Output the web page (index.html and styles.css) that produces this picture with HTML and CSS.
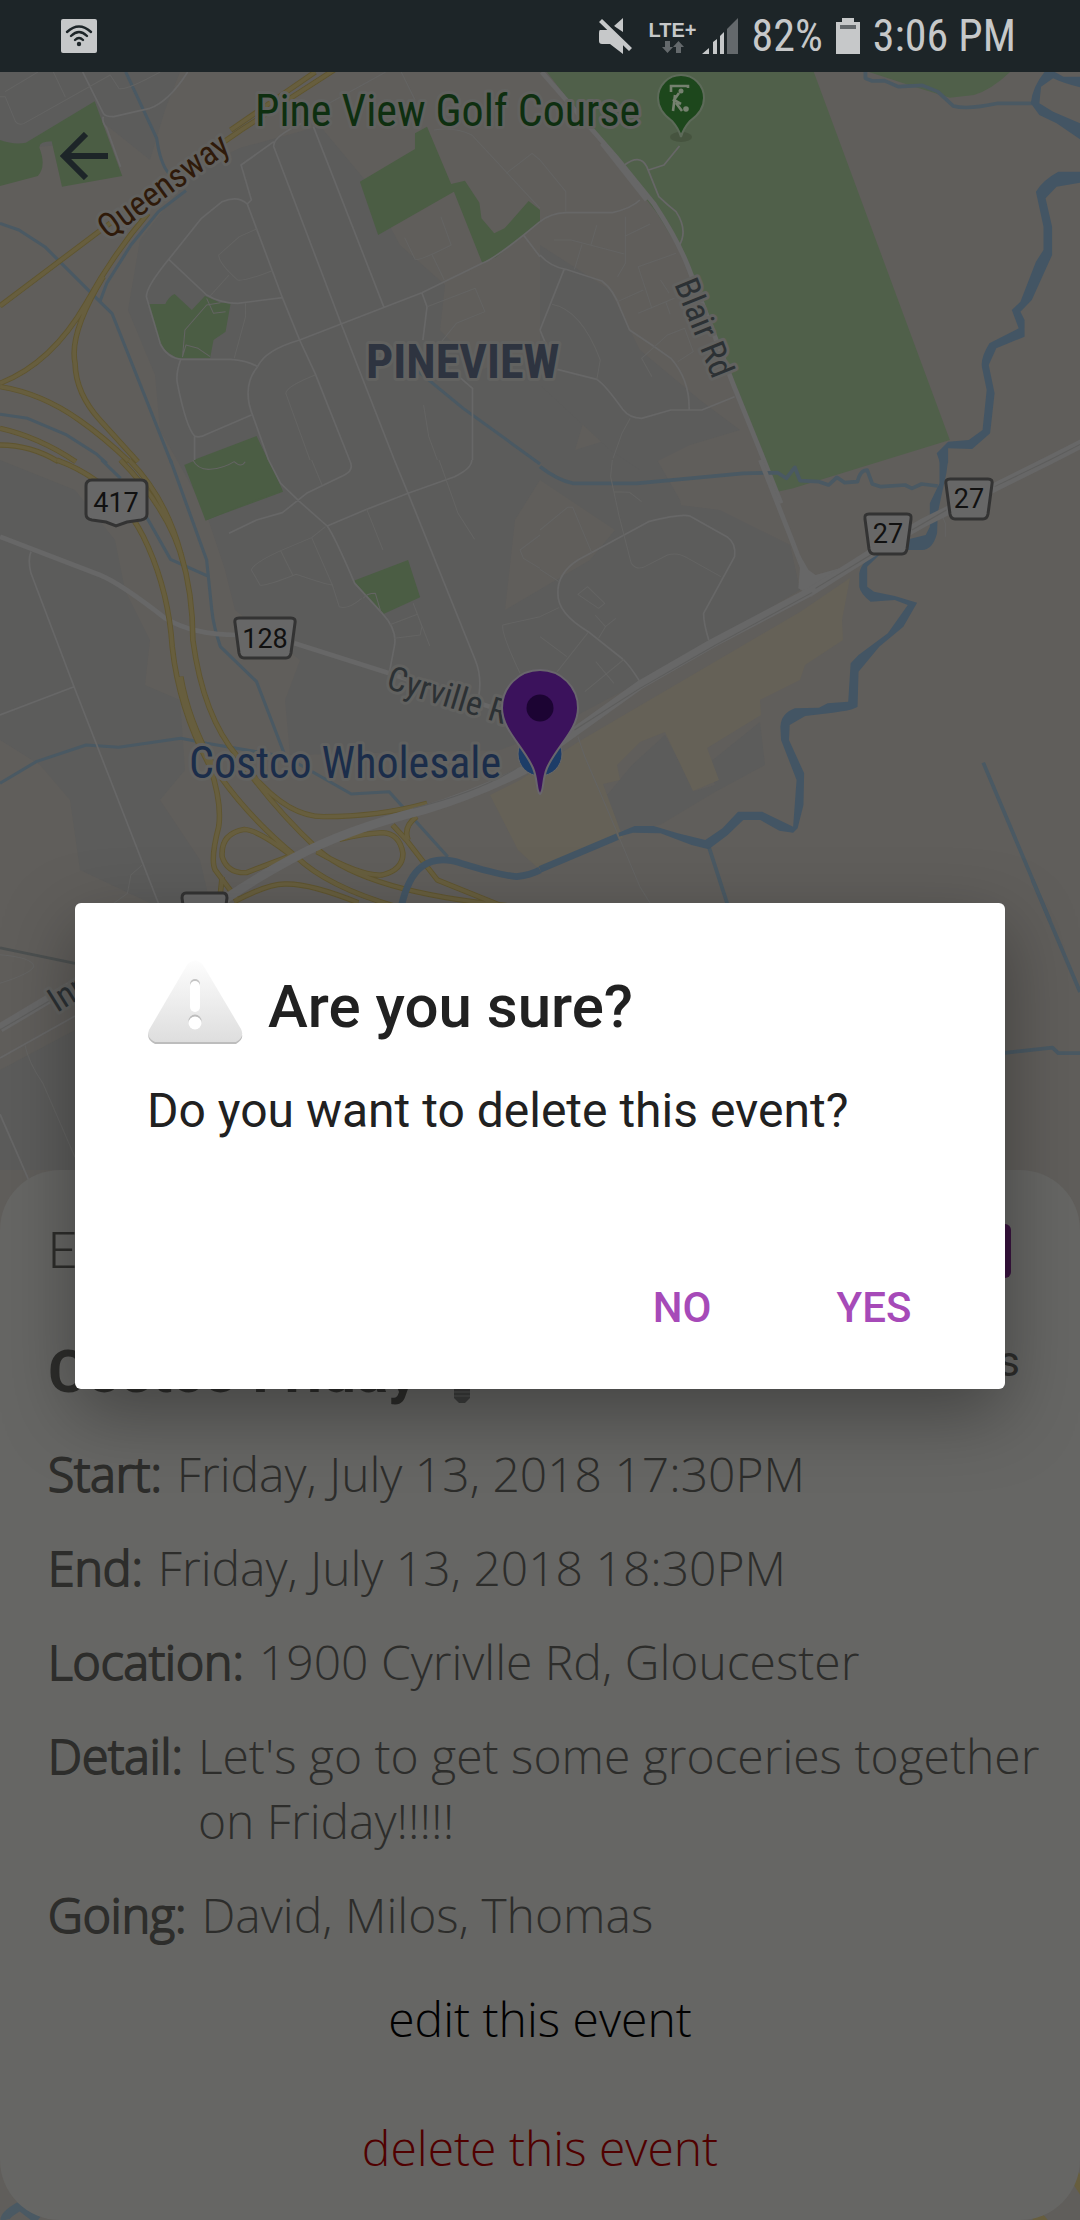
FILE: index.html
```html
<!DOCTYPE html>
<html lang="en">
<head>
<meta charset="utf-8">
<meta name="viewport" content="width=device-width, initial-scale=1">
<title>Costco Friday</title>
<link rel="stylesheet" href="styles.css">
</head>
<body>
<header class="status">
  <svg class="status-wifi" viewBox="0 0 36 34" width="36" height="34" aria-label="Wi-Fi"><rect width="36" height="34" rx="2" fill="#c6c8c9"/><g fill="none" stroke="#1d2528" stroke-width="2.4" stroke-linecap="round"><path d="M6 13Q18 2 30 13M10 17Q18 9 26 17M14 21Q18 17 22 21"/></g><circle cx="18" cy="25" r="2.2" fill="#1d2528"/></svg>
  <div class="status-right">
    <svg viewBox="0 0 34 36" width="34" height="36" aria-label="Muted"><path d="M24 0v14L15 8zM1 12H9L24 27V36L11 26H3Q0 26 0 23V15Q0 12 1 12zM3 1L33 30L30 33L0 4z" fill="#c6c8c9"/><path d="M5 0L34 28" stroke="#1d2528" stroke-width="2"/></svg>
    <div class="lte"><span>LTE+</span><svg viewBox="0 0 22 12" width="22" height="12"><path d="M3 0h5v6h3L5.500 12 0 6h3zM14 12h5V6h3L16.500 0 11 6h3z" fill="#64696c"/></svg></div>
    <svg class="signal" viewBox="0 0 36 36" width="36" height="36" aria-label="Signal"><path d="M0 36l7-6v6zM11 36V24l4-3v15zM18 36V18l4-4v22z" fill="#c6c8c9"/><path d="M25 36V11L36 0v36z" fill="#64696c"/></svg>
    <span>82%</span>
    <svg class="battery" viewBox="0 0 24 36" width="24" height="36" aria-label="Battery"><path d="M6 0h12v4h6v32H0V4h6z" fill="#c6c8c9"/><path d="M4 7h16v4H4z" fill="#64696c"/></svg>
    <time>3:06 PM</time>
  </div>
</header>
<main class="screen">
  <svg class="map" viewBox="0 72 1080 2148" preserveAspectRatio="xMidYMin slice" role="img" aria-label="Map">
    <rect y="72" width="1080" height="2148" class="land"/>
    <!-- built-up areas -->
    <g class="urban">
      <path d="M0 72H180L165 110 150 160 100 120 60 145 0 150zM195 170L240 148 320 126 365 180 400 245 445 285 440 330 480 370 560 345 590 400 575 450 640 430 680 500 690 545 660 560 600 520 540 480 515 520 505 610 590 560 640 500 720 510 790 545 800 590 700 650 540 735 500 750 290 755 285 700 300 660 235 610 225 570 205 510 160 430 155 375 128 310 140 240z"/>
      <path d="M540 245L610 290 640 350 700 400 740 430 690 445 640 470 610 450 540 385zM0 460L75 490 115 540 125 590 150 640 145 685 180 700 185 770 160 800 200 860 210 903H150L80 870 70 800 40 765 0 740zM0 1070L75 1030V1170H0zM603 800L632 765 665 735 695 791 715 785 709 763 760 722 765 765 715 792 660 825 610 832z"/>
    </g>
    <!-- commercial strip -->
    <path class="commercial" d="M490 795L520 780 578 742 800 612 850 578 842 620 843 640 805 665 800 680 760 700 761 715 707 748 719 780 693 791 665 732 640 742 617 765 620 780 603 784 623 838 540 870 518 850z"/>
    <g transform="translate(0 0) scale(.34439 .33333)">
      <path class="park" d="M0 420Q40 435 75 428L275 304 355 528 180 560 150 424Q110 425 115 445 135 500 110 528L0 558zM432 912H480Q490 890 507 882L557 930 595 888 640 908H670L655 995 620 1020 610 1075H515Q470 1050 460 1020zM1205 400L1240 380 1310 552 1350 542 1392 608 1398 655 1435 700 1465 685 1535 603 1568 630V668L1520 705 1440 772 1400 788 1318 575 1098 705 1045 545 1205 447zM562 1380L745 1308 822 1475 600 1560z"/>
      <path class="stream" d="M365 216L455 415Q465 490 490 520M540 572L460 635 380 735 310 850 290 905 325 940 498 1390M0 670L55 690 130 740 290 905M0 1243L80 1255 190 1303 280 1362 310 1390M1180 1085L1345 1225 1568 1392"/>
      <path class="road" d="M240 216L300 340Q305 350 330 350L435 325Q490 305 545 216M300 350Q295 365 310 385L350 500M795 425L700 495 730 600 718 612Q690 585 645 605L585 655 490 778Q425 860 425 890L465 1030Q485 1075 530 1078H670Q715 1080 748 1100M490 778L600 885Q640 910 690 910L820 893M718 612L820 893 870 1020 915 1120 1015 1380M880 368Q790 410 795 440L990 970 1145 1380M910 380L1115 922M748 1100Q770 1050 870 1020L1225 878 1400 790Q1440 775 1568 665M525 1078Q510 1120 515 1150 540 1280 565 1308 580 1315 600 1303L730 1245M748 1100Q700 1160 735 1250L780 1380M1225 878L1240 920 1228 1020M1310 1110L1372 1165V1380M1520 705L1568 770M565 1310V1380"/>
      <path class="lane" d="M15 275L110 216M0 290H15L45 365Q55 378 70 370L320 225 345 265Q360 275 465 216M155 216L190 292M745 687L695 710 635 765Q635 790 690 840 710 845 790 812M665 825L610 888M713 910V950L680 1075M1175 713L1205 778Q1215 785 1310 735L1280 650M1255 765L1290 840M1240 920L1380 865 1408 935 1325 970 1282 1025M915 1125Q830 1160 830 1180L900 1380M1230 1215L1245 1310 1270 1380M1568 625L1370 405Q1320 380 1260 390M1470 520L1545 460 1568 480M920 330L1120 216M1165 216L1205 300M610 1070L575 1045 540 1035 530 1070 537 990 600 915 640 908M600 895L620 940 655 935"/>
      <path class="edge" d="M0 918L280 700 490 540 700 390 970 210M430 640Q330 760 250 910 150 1090 0 1150M300 830Q200 1000 218 1090 220 1180 290 1260L400 1385M0 1160Q120 1180 230 1260 300 1310 375 1385M0 1285Q110 1310 220 1385M0 1335Q90 1335 170 1385"/>
      <path class="highway" d="M0 918L280 700 490 540 700 390 970 210M430 640Q330 760 250 910 150 1090 0 1150M300 830Q200 1000 218 1090 220 1180 290 1260L400 1385M0 1160Q120 1180 230 1260 300 1310 375 1385M0 1285Q110 1310 220 1385M0 1335Q90 1335 170 1385"/>
      <path class="edge" d="M670 390L915 216"/><path class="highway" d="M670 390L915 216"/>
    </g>
    <g transform="translate(540 0) scale(.34439 .33333)">
      <path class="golf" d="M20 216H795L1190 1320 735 1465 690 1475 640 1340 405 750 340 640 150 390zM955 216H1365Q1310 270 1260 285L1190 293 1080 258z"/>
      <path class="stream wide" d="M945 216V235L965 243 1000 242 1040 260 1110 256 1155 275 1200 318Q1240 330 1330 310H1430"/>
      <path class="river" d="M1425 310Q1430 260 1465 216H1495L1520 230H1568V262Q1520 250 1490 235L1455 260 1450 310 1490 335 1568 370V418L1500 370 1450 345zM1568 515H1505Q1460 540 1440 575L1462 680V750L1440 785 1395 905 1370 930 1390 985 1305 1030Q1275 1080 1285 1110L1297 1170 1285 1290 1245 1320 1185 1325 1152 1360 1162 1390H1185V1345L1255 1347 1307 1300 1320 1180 1303 1095 1325 1045 1407 1010V960L1395 935 1428 900 1487 765V680L1468 595 1500 560 1568 548z"/>
      <path class="road" d="M0 665Q30 640 75 638H210Q265 625 290 600M0 765Q30 800 75 808L180 843Q215 870 235 930L260 990 325 1035 380 1075Q435 1140 433 1228M50 1108L165 1138Q190 1155 240 1228 260 1255 295 1255L380 1230H470L565 1190M70 808L0 990M245 495Q290 460 310 500L345 590Q370 615 395 635 430 690 405 735M315 510L360 495 405 438M0 990L40 1090"/>
      <path class="lane" d="M0 480L75 575V635M40 720H90L245 762M165 675L148 735M122 733L100 808M248 650V790L225 830M248 708L320 672M395 760L285 800 325 925M225 905L300 870M285 940L390 895M350 840L375 880M400 1085L445 1055 420 985 370 1005 295 1075 325 1130M35 913Q120 930 175 1080L165 1138M262 1255L238 1300 212 1375M365 905L378 943"/>
      <path class="major" d="M5 216L220 470 330 610Q400 720 430 800L560 1150 650 1380 700 1510"/>
      <path class="major" d="M180 430L310 600"/>
    </g>
    <g transform="translate(0 460) scale(.34439 .33333)">
      <path class="park" d="M535 15L570 0H780L820 90 720 128 597 182zM1027 362L1185 300 1220 412 1112 463z"/>
      <path class="stream" d="M295 0L350 55M425 170L495 298 607 350M495 0L600 300 615 450Q620 500 640 560L745 665 825 880M0 970L105 905 250 855 345 862 525 835 600 850 830 890 1020 1002 1130 995 1300 1190"/>
      <path class="major" d="M0 230L290 345Q350 370 480 475 560 525 690 525M855 550L1130 640 1480 760"/>
      <path class="road" d="M90 275Q80 300 90 340L215 680 460 1330M0 765L215 680M780 0L815 70 870 125 950 198Q970 225 1030 370L1110 460Q1155 510 1145 560L1130 640M950 198L1065 148 1185 100 1320 50Q1370 25 1370 0M1145 0L1185 100 1380 600Q1400 650 1390 710M665 220L745 180 820 158 890 100 1000 45Q1030 30 1015 0"/>
      <path class="lane" d="M905 0L935 75M1275 0L1330 160 1378 238M1065 148L1112 270M945 200L905 233 815 272Q735 310 730 330L755 375Q770 380 860 343 950 375 965 375L905 233M815 272L850 345M965 375L985 440Q1010 450 1050 415M1130 495L1212 463M1145 535L1220 525 1225 500 1200 430 1248 558M1568 470L1460 495Q1455 520 1510 640M1568 225L1510 270 1520 295 1568 325M560 0Q575 30 610 28 650 25 680 5 700 25 712 5M1055 415Q1065 400 1090 400L1107 460M413 1215L380 1245 370 1300 330 1330"/>
      <path class="edge" d="M375 0Q480 110 525 280 560 400 560 540 590 770 690 890 790 1040 925 1170 1080 1310 1568 1345M350 0Q500 160 535 320M165 0Q350 70 430 260 490 400 500 560 520 750 610 920M525 650Q550 800 640 950 730 1080 860 1190 950 1280 1150 1340M610 920Q645 1030 635 1100 610 1200 625 1230L690 1320M640 1300L645 1250M700 900Q820 1070 940 1070 1100 1070 1240 1030M850 1190Q750 1110 710 1108 640 1120 645 1190 660 1240 715 1238L850 1185M920 1175Q1050 1250 1110 1245 1170 1230 1170 1180 1160 1120 1110 1118 1060 1120 985 1138M1140 1095L1180 1140 1270 1260 1450 1335M1185 1140Q1170 1100 1210 1070M680 1325Q780 1270 830 1272 900 1270 1040 1328"/>
      <path class="highway" d="M375 0Q480 110 525 280 560 400 560 540 590 770 690 890 790 1040 925 1170 1080 1310 1568 1345M350 0Q500 160 535 320M165 0Q350 70 430 260 490 400 500 560 520 750 610 920M525 650Q550 800 640 950 730 1080 860 1190 950 1280 1150 1340M610 920Q645 1030 635 1100 610 1200 625 1230L690 1320M640 1300L645 1250M700 900Q820 1070 940 1070 1100 1070 1240 1030M850 1190Q750 1110 710 1108 640 1120 645 1190 660 1240 715 1238L850 1185M920 1175Q1050 1250 1110 1245 1170 1230 1170 1180 1160 1120 1110 1118 1060 1120 985 1138M1140 1095L1180 1140 1270 1260 1450 1335M1185 1140Q1170 1100 1210 1070M680 1325Q780 1270 830 1272 900 1270 1040 1328"/>
      <path class="river-line" d="M1165 1340Q1185 1250 1225 1220 1270 1185 1340 1210 1450 1245 1500 1250 1540 1245 1568 1230"/>
      <path class="major broad" d="M650 1320Q750 1250 850 1195 1000 1110 1230 1050 1390 1000 1540 920"/>
      <path class="median" d="M1200 1045Q1380 1000 1500 925"/>
    </g>
    <g transform="translate(540 460) scale(.34439 .33333)">
      <path class="stream wide" d="M0 20Q50 60 95 70H280L590 40 690 38 715 55 740 22 755 62 810 65 838 75 862 52 885 68 922 65Q930 30 950 30L965 72 990 80 1060 75 1080 85 1108 72 1155 78"/>
      <path class="river-line" d="M0 1228L225 1130"/>
      <path class="stream wide" d="M490 1160L545 1335M1287 908L1480 1380"/>
      <path class="river" d="M1160 0H1185L1180 40 1165 110 1155 160 1153 220Q1140 270 1110 270H1000L950 320V380L970 395 1030 408 1095 428 1055 500 985 560 925 635 922 740Q910 750 850 758L770 768 725 795 723 840 767 940 765 1035 748 1105 735 1118 695 1112 640 1080 590 1080 545 1125 490 1168 440 1155 350 1120 270 1118 228 1130V1118L275 1098H330L400 1120 480 1140 530 1105 575 1055H645L735 1100 745 960 700 840 698 800Q700 760 740 745L810 743 835 730 895 725 902 610 925 585 1010 520 1068 435 1030 420 960 425Q930 400 927 380V340Q935 300 980 280L1070 238 1120 225 1132 200V130L1160 70z"/>
      <path class="road" d="M490 540Q475 490 475 460L565 290Q570 250 545 232L435 168Q410 160 315 185L110 300Q50 340 52 400 50 460 140 515L240 597Q260 615 290 665"/>
      <path class="lane" d="M210 0L205 50 230 170 265 310Q280 330 300 322L370 285Q400 275 430 295L525 350M150 278L95 142H80L0 210M0 328L55 365M0 470L55 443M0 530L78 590M50 635L140 517M215 95L260 97 295 125M162 605L215 670M245 597L130 695M110 403L138 380 188 430 170 445zM160 465L190 500 170 535M190 500L220 475M1165 160L1177 190V230M110 830L130 890 225 1120 290 1280 320 1330"/>
      <path class="major" d="M640 0L735 250 785 385"/>
      <path class="junction" d="M735 250L755 320 750 385 790 410 800 375 870 325 800 345 780 330z"/>
      <path class="major broad" d="M40 860L290 675 500 550 785 395 1000 255 1110 190 1480 0 1590 -58"/>
      <path class="median" d="M100 810L290 685 510 555 790 398M800 385L960 285M1080 210L1180 150M1320 80L1480 0 1590 -58"/>
    </g>
    <g transform="translate(0 880) scale(.35714 .34439)">
      <path class="gully" d="M0 197L210 242"/>
      <path class="major broad" d="M0 430L210 300"/><path class="median" d="M0 435L140 350"/>
      <path class="road" d="M0 517L210 395M0 680L80 870"/>
      <path class="lane" d="M0 217Q90 225 95 250 90 270 0 300M70 480Q80 530 120 590L210 805"/>
    </g>
    <g transform="translate(540 880) scale(.34439)"><path class="stream wide" d="M1430 0L1568 325M1350 502L1488 487 1505 503H1568"/></g>
    <path class="stream" d="M5 2220Q4 2215 20 2206L38 2220"/><path class="highway" d="M1074 2175L1090 2200M1036 2215L1045 2225"/>
    <g class="shield">
      <path d="M92 480H141Q147 480 147 486V514Q147 519 141 520L127 522 116 526 106 522 92 520Q86 519 86 514V486Q86 480 92 480z"/>
      <path d="M239 618H291Q296 618 295 623L291 653Q290 658 286 658H244Q240 658 239 653L235 623Q234 618 239 618z"/>
      <path d="M869 514H907Q912 514 911 519L907 549Q906 554 902 554H874Q870 554 869 549L865 519Q864 514 869 514z"/>
      <path d="M950 479H988Q993 479 992 484L988 514Q987 519 983 519H955Q951 519 950 514L946 484Q945 479 950 479z"/>
      <path d="M186 893H223Q227 893 227 898L222 933H187L182 898Q182 893 186 893z"/>
    </g>
    <g class="shield-text"><text x="116" y="512">417</text><text x="265" y="648">128</text><text x="888" y="543">27</text><text x="969" y="508">27</text></g>
    <g class="label">
      <text class="place" x="255" y="126" fill="#0e2f10">Pine View Golf Course</text>
      <text class="place" x="189" y="778" fill="#1b2d4a">Costco Wholesale</text>
      <text class="district" x="366" y="378">PINEVIEW</text>
      <text class="street" transform="translate(108 240) rotate(-36)" fill="#2f1a0a">Queensway</text>
      <text class="street" transform="translate(674 284) rotate(68)">Blair Rd</text>
      <text class="street" transform="translate(385 688) rotate(17)">Cyrville Rd</text>
      <text class="street" transform="translate(57 1013) rotate(-32)">Innes Rd</text>
    </g>
    <g class="golf-pin"><ellipse cx="681" cy="137" rx="11" ry="5" fill="#46543f"/><path d="M681 137Q679 129 672 121 658 111 658 98A23 23 0 0 1 704 98Q704 111 690 121 683 129 681 137z" fill="#1d471c" stroke="#5d6a59" stroke-width="2"/><path d="M671 92V86H688V88M679 93L674 100 681 104M675 95L673 111M676 103L682 111" fill="none" stroke="#75816f" stroke-width="2.600"/><circle cx="681" cy="91" r="2.500" fill="#75816f"/><circle cx="686" cy="109" r="2.800" fill="#75816f"/></g>
    <circle cx="540" cy="754" r="22" fill="#1d3d68" stroke="#686868" stroke-width="1"/>
    <path d="M540 794C536 792 538 780 533 768 524 747 502 730 502 708A38 38 0 0 1 578 708C578 730 556 747 547 768 542 780 544 792 540 794z" fill="#3b125c" stroke="#69666c" stroke-width="2"/>
    <circle cx="540" cy="708" r="13.500" fill="#1c0433"/>
  </svg>
  <button class="back" type="button" aria-label="Back"><svg viewBox="0 0 48 48" width="48" height="48"><path d="M26 2L4 24 26 46M4 24H48" fill="none" stroke="#1d2528" stroke-width="6"/></svg></button>
  <section class="sheet">
    <div class="sheet-top"><span class="kind">Event</span><span class="join"></span></div>
    <div class="sheet-title"><h1>Costco Friday</h1><svg class="bulb" viewBox="0 0 40 56" width="40" height="56"><circle cx="20" cy="20" r="18" fill="#5f5530"/><path d="M11 34H29V40H11z" fill="#514b2d"/><path d="M12 39H28V49L23 54H17L12 49z" fill="#3c3d3c"/><path d="M12 43H28M12 47H28" stroke="#4c4d4c" stroke-width="1.500"/></svg><span class="guests">guests</span></div>
    <dl class="facts">
      <div><dt>Start:</dt><dd>Friday, July 13, 2018 17:30PM</dd></div>
      <div><dt>End:</dt><dd>Friday, July 13, 2018 18:30PM</dd></div>
      <div><dt>Location:</dt><dd>1900 Cyrivlle Rd, Gloucester</dd></div>
      <div><dt>Detail:</dt><dd>Let's go to get some groceries together on Friday!!!!!</dd></div>
      <div><dt>Going:</dt><dd>David, Milos, Thomas</dd></div>
    </dl>
    <button class="action" type="button">edit this event</button>
    <button class="action danger" type="button">delete this event</button>
  </section>
  <div class="overlay">
    <div class="dialog" role="alertdialog" aria-labelledby="dialog-title" aria-describedby="dialog-text">
      <div class="dialog-head">
        <svg viewBox="0 0 96 88" width="96" height="88" aria-hidden="true"><defs><linearGradient id="warn" x2="0" y2="1"><stop stop-color="#fdfdfd"/><stop offset="1" stop-color="#dedede"/></linearGradient></defs><path d="M20 50L94 75Q98 82 89 87H8Q-1 83 2 75z" fill="#bdbdbd"/><path d="M40 8Q48-1 56 8L94 72Q98 80 89 85H8Q-1 81 2 73z" fill="url(#warn)"/><rect x="43" y="22" width="10" height="31" rx="5" fill="#c4c4c4"/><rect x="43" y="24" width="10" height="31" rx="5" fill="#fff"/><circle cx="48" cy="64" r="6.500" fill="#bdbdbd"/><circle cx="48" cy="66" r="6.500" fill="#fff"/></svg>
        <h2 id="dialog-title">Are you sure?</h2>
      </div>
      <p id="dialog-text">Do you want to delete this event?</p>
      <div class="dialog-actions"><button type="button">NO</button><button type="button">YES</button></div>
    </div>
  </div>
</main>
</body>
</html>
```
FILE: styles.css
```css
* { box-sizing: border-box; }
body {
  margin: 0;
  min-height: 100vh;
  display: flex;
  flex-direction: column;
  background: #605e5b;
  font-family: Roboto, sans-serif;
}
button { border: 0; background: none; padding: 0; font: inherit; cursor: pointer; }
svg { display: block; flex: none; }

.status {
  height: 72px;
  padding: 0 64px 0 61px;
  display: flex;
  align-items: center;
  justify-content: space-between;
  background: #1d2528;
  color: #c6c8c9;
  font-family: "Roboto Condensed", Roboto, sans-serif;
  font-size: 44px;
  line-height: 52px;
}
.status-right { display: flex; align-items: center; }
.lte {
  margin: 0 5px 0 16px;
  display: flex;
  flex-direction: column;
  align-items: center;
  font: 700 20px/22px "Liberation Sans", sans-serif;
}
.signal { margin-right: 14px; }
.battery { margin: 0 13px; }

.screen { position: relative; flex: 1; display: flex; flex-direction: column; }
.map { position: absolute; inset: 0; width: 100%; height: 100%; }
.land { fill: #605e5b; }
.urban { fill: #5c5c5b; }
.commercial { fill: #656157; }
.park { fill: #4b5d44; }
.golf { fill: #50604a; }
.river { fill: #435564; }
.river-line, .stream, .road, .lane, .major, .edge, .highway, .median, .gully { fill: none; stroke-linejoin: round; }
.river-line { stroke: #435564; stroke-width: 20; }
.stream { stroke: #4a5963; stroke-width: 9; }
.wide { stroke-width: 11; }
.road { stroke: #676767; stroke-width: 5; }
.lane { stroke: #646463; stroke-width: 3; }
.major { stroke: #676767; stroke-width: 14; }
.junction { fill: #676767; }
.broad { stroke-width: 27; }
.median { stroke: #5d5d5c; stroke-width: 3; }
.gully { stroke: #4c5050; stroke-width: 8; }
.edge { stroke: #5f552f; stroke-width: 16; }
.highway { stroke: #675e3e; stroke-width: 11; }
.shield { fill: #676767; stroke: #333; stroke-width: 3; }
.shield-text { font: 27px Roboto, sans-serif; fill: #111; text-anchor: middle; }
.label {
  font-family: "Roboto Condensed", Roboto, sans-serif;
  paint-order: stroke;
  stroke: #626260;
  stroke-width: 6;
  stroke-linejoin: round;
  fill: #2c3134;
}
.place { font-size: 44px; }
.district { font-size: 48px; font-weight: 700; fill: #2e3440; }
.street { font-size: 34px; }

.back { position: relative; align-self: flex-start; margin: 60px 0 0 60px; }

.sheet {
  position: relative;
  margin-top: auto;
  padding: 32px 40px 40px;
  border-radius: 60px;
  background: #666664;
  color: #2d2d2b;
  display: flex;
  flex-direction: column;
}
.sheet-top, .sheet-title, .facts { padding-left: 8px; }
.sheet-top { display: flex; align-items: center; justify-content: space-between; height: 98px; }
.kind { font-size: 50px; font-weight: 300; }
.join { width: 240px; height: 54px; margin-right: 29px; border-radius: 6px; background: #3a1440; }
.sheet-title { display: flex; align-items: flex-end; height: 112px; margin-bottom: 29px; }
.sheet-title h1 { margin: 0; font-size: 60px; font-weight: 700; line-height: 80px; }
.bulb { margin: 0 0 7px 24px; }
.guests { margin: 0 20px 26px auto; font-size: 43px; }
.facts { margin: 0 0 39px; display: flex; flex-direction: column; gap: 29px; }
.facts div { display: flex; }
.facts dt, .facts dd, .action { font: 300 48px/65px "Open Sans", sans-serif; }
.facts dt { flex: none; margin-right: 15px; -webkit-text-stroke: 2px #2d2d2b; }
.facts dd { margin: 0; }
.action { align-self: center; color: #000; }
.danger { margin-top: 64px; color: #500000; }

.overlay { position: absolute; inset: 0; display: flex; align-items: center; padding: 0 75px; }
.dialog {
  width: 100%;
  padding: 54px 35px 28px 72px;
  border-radius: 6px;
  background: #fff;
  color: #212121;
  box-shadow: 0 24px 72px rgba(0, 0, 0, .34);
}
.dialog-head { display: flex; align-items: flex-end; gap: 25px; }
.dialog h2 { margin: 0; font-size: 60px; font-weight: 500; line-height: 76px; }
.dialog p { margin: 34px 0 110px; font-size: 48px; line-height: 64px; }
.dialog-actions { display: flex; justify-content: flex-end; }
.dialog-actions button { min-width: 192px; height: 108px; font-size: 42px; font-weight: 500; color: #a64ab8; }
```
